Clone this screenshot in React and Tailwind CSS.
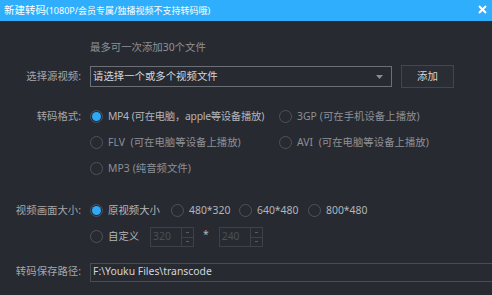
import React from 'react'

const FONT = "font-['Noto_Sans','Noto_Sans_CJK_SC',sans-serif]"

function Radio({ checked }) {
  return (
    <span className="flex h-[13px] w-[13px] shrink-0 items-center justify-center rounded-full border border-[#4f525a]">
      {checked && <span className="h-[9px] w-[9px] rounded-full bg-[#2ea9f7]" />}
    </span>
  )
}

function Option({ checked, label, note, className = '', dim }) {
  return (
    <div className={`flex items-center gap-[5px] whitespace-nowrap ${className}`}>
      <Radio checked={checked} />
      <span className={dim ? 'text-[#8e9096]' : 'text-[#b3b5ba]'}>
        {label}
        {note && <span className="ml-[3px]">{note}</span>}
      </span>
    </div>
  )
}

function Spin({ value }) {
  return (
    <div className="flex h-[20px] w-[44px] border border-[#3e4148]">
      <span className="flex flex-1 items-center pl-[2px] text-[#4d5057]">{value}</span>
      <div className="flex w-[12px] flex-col border-l border-[#3e4148]">
        <span className="flex flex-1 items-center justify-center border-b border-[#3e4148]">
          <span className="h-px w-[3px] bg-[#5a5d64]" />
        </span>
        <span className="flex flex-1 items-center justify-center">
          <span className="h-px w-[3px] bg-[#5a5d64]" />
        </span>
      </div>
    </div>
  )
}

function Label({ children }) {
  return <div className="w-[82px] shrink-0 whitespace-nowrap pr-[1px] text-right text-[#a4a6ab]">{children}</div>
}

export default function App() {
  return (
    <div className={`h-[295px] w-[492px] overflow-hidden bg-[#272a31] text-[10.4px] ${FONT}`}>
      {/* title bar */}
      <div className="flex h-[21px] items-center justify-between bg-[#2eaefc] pl-[4px] pr-[5px] text-white">
        <div className="flex items-baseline whitespace-nowrap">
          <span className="text-[10.5px]">新建转码</span>
          <span className="text-[9px]">(1080P/会员专属/独播视频不支持转码哦)</span>
        </div>
        <svg width="9" height="9" viewBox="0 0 9 9" className="mb-[2px]">
          <path d="M1 1L8 8M8 1L1 8" stroke="white" strokeWidth="2" />
        </svg>
      </div>

      <div className="mt-[19px] flex h-[16px] items-center pl-[90px] text-[#8f9197]">
        最多可一次添加30个文件
      </div>

      {/* source */}
      <div className="mt-[9px] flex h-[23px] items-center gap-[8px]">
        <Label>选择源视频:</Label>
        <div className="flex h-[21px] w-[302px] items-center justify-between border border-[#6c6f75] pl-[2px] pr-[8px] text-[#d4d6da]">
          <span>请选择一个或多个视频文件</span>
          <svg width="7" height="4" viewBox="0 0 7 4">
            <path d="M0 0H7L3.5 4Z" fill="#8a8d93" />
          </svg>
        </div>
        <button className="ml-[1px] flex h-[23px] w-[53px] items-center justify-center border border-[#43464d] bg-[#2a2d34] text-[#d4d6da]">
          添加
        </button>
      </div>

      {/* format */}
      <div className="mt-[16px] flex">
        <Label>
          <div className="flex h-[26px] items-center justify-end">转码格式:</div>
        </Label>
        <div className="ml-[8px] flex flex-col">
          <div className="flex h-[26px] items-center">
            <Option checked label="MP4" note="(可在电脑，apple等设备播放)" className="w-[189px] tracking-[-0.3px]" />
            <Option label="3GP" note="(可在手机设备上播放)" dim />
          </div>
          <div className="flex h-[26px] items-center">
            <Option label="FLV" note=" (可在电脑等设备上播放)" className="w-[189px]" dim />
            <Option label="AVI" note=" (可在电脑等设备上播放)" dim />
          </div>
          <div className="flex h-[26px] items-center">
            <Option label="MP3" note="(纯音频文件)" dim />
          </div>
        </div>
      </div>

      {/* size */}
      <div className="mt-[16px] flex">
        <Label>
          <div className="flex h-[26px] items-center justify-end">视频画面大小:</div>
        </Label>
        <div className="ml-[8px] flex flex-col">
          <div className="flex h-[26px] items-center">
            <Option checked label="原视频大小" className="w-[81px]" />
            <Option label="480*320" className="w-[68px]" />
            <Option label="640*480" className="w-[69px]" />
            <Option label="800*480" />
          </div>
          <div className="flex h-[26px] items-center">
            <Option label="自定义" className="w-[60px]" />
            <Spin value="320" />
            <span className="ml-[9px] mr-[10px] mb-[4px] text-[#b3b5ba]">*</span>
            <Spin value="240" />
          </div>
        </div>
      </div>

      {/* path */}
      <div className="mt-[12px] flex h-[20px] items-center gap-[8px]">
        <Label>转码保存路径:</Label>
        <div className="flex h-[19px] flex-1 items-center border border-r-0 border-[#494c53] pl-[2px] text-[#d4d6da]">
          F:\Youku Files\transcode
        </div>
      </div>
    </div>
  )
}
